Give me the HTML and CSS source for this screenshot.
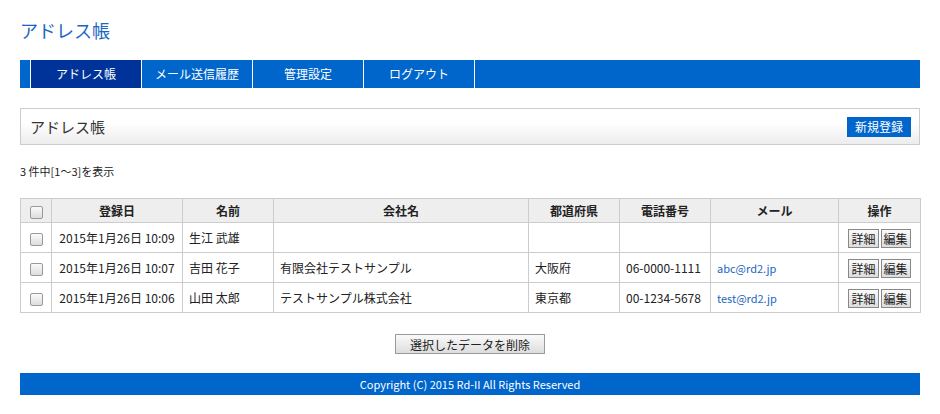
FILE: index.html
```html
<!DOCTYPE html>
<html lang="ja">
<head>
    <meta charset="UTF-8">
    <title>アドレス帳</title>
    <link rel="stylesheet" href="styles.css">
</head>
<body>
    <div class="wrap">
        <h1 class="site-title">アドレス帳</h1>
        <ul class="nav">
            <li class="active"><a href="#">アドレス帳</a></li>
            <li><a href="#">メール送信履歴</a></li>
            <li><a href="#">管理設定</a></li>
            <li><a href="#">ログアウト</a></li>
        </ul>

        <div class="panel-head">
            <h2>アドレス帳</h2>
            <a class="btn-new" href="#">新規登録</a>
        </div>

        <p class="count">3 件中[1～3]を表示</p>

        <table class="list">
            <colgroup>
                <col style="width:31px">
                <col style="width:131px">
                <col style="width:91px">
                <col style="width:255px">
                <col style="width:91px">
                <col style="width:91px">
                <col style="width:128px">
                <col style="width:82px">
            </colgroup>
            <thead>
                <tr>
                    <th><span class="chk"></span></th>
                    <th>登録日</th>
                    <th>名前</th>
                    <th>会社名</th>
                    <th>都道府県</th>
                    <th>電話番号</th>
                    <th>メール</th>
                    <th>操作</th>
                </tr>
            </thead>
            <tbody>
                <tr>
                    <td><span class="chk"></span></td>
                    <td class="c">2015年1月26日 10:09</td>
                    <td>生江 武雄</td>
                    <td></td>
                    <td></td>
                    <td></td>
                    <td></td>
                    <td class="c"><span class="sbtn">詳細</span><span class="sbtn">編集</span></td>
                </tr>
                <tr>
                    <td><span class="chk"></span></td>
                    <td class="c">2015年1月26日 10:07</td>
                    <td>吉田 花子</td>
                    <td>有限会社テストサンプル</td>
                    <td>大阪府</td>
                    <td>06-0000-1111</td>
                    <td><a href="#">abc@rd2.jp</a></td>
                    <td class="c"><span class="sbtn">詳細</span><span class="sbtn">編集</span></td>
                </tr>
                <tr>
                    <td><span class="chk"></span></td>
                    <td class="c">2015年1月26日 10:06</td>
                    <td>山田 太郎</td>
                    <td>テストサンプル株式会社</td>
                    <td>東京都</td>
                    <td>00-1234-5678</td>
                    <td><a href="#">test@rd2.jp</a></td>
                    <td class="c"><span class="sbtn">詳細</span><span class="sbtn">編集</span></td>
                </tr>
            </tbody>
        </table>

        <div class="actions">
            <button class="btn-del">選択したデータを削除</button>
        </div>

        <div class="footer">Copyright (C) 2015 Rd-II All Rights Reserved</div>
    </div>
</body>
</html>
```

FILE: styles.css
```css
body {
    margin: 0;
    font-family: "Noto Sans CJK JP", "Liberation Sans", sans-serif;
    font-size: 12px;
    color: #222;
    background: #fff;
}
.wrap {
    width: 900px;
    margin: 0 20px;
}
.site-title {
    margin: 0;
    padding-top: 16px;
    height: 28px;
    line-height: 28px;
    font-size: 18px;
    font-weight: normal;
    color: #1a66c2;
}
.nav {
    list-style: none;
    margin: 16px 0 0;
    padding: 0 0 0 10px;
    height: 28px;
    background: #0066cc;
    display: flex;
}
.nav li {
    width: 110px;
    border-left: 1px solid #fff;
}
.nav li:last-child {
    border-right: 1px solid #fff;
}
.nav a {
    display: block;
    height: 28px;
    line-height: 28px;
    text-align: center;
    color: #fff;
    text-decoration: none;
    font-size: 12px;
}
.nav li.active a {
    background: #003399;
}
.panel-head {
    margin-top: 20px;
    height: 35px;
    border: 1px solid #ccc;
    background: linear-gradient(#fff 40%, #ececec);
    display: flex;
    align-items: center;
    justify-content: space-between;
    padding: 0 8px 0 9px;
}
.panel-head h2 {
    margin: 0;
    font-size: 15px;
    font-weight: normal;
    color: #333;
}
.btn-new {
    display: block;
    width: 64px;
    height: 20px;
    line-height: 20px;
    text-align: center;
    background: #0066cc;
    color: #fff;
    text-decoration: none;
    font-size: 12px;
}
.count {
    margin: 17px 0 0;
    line-height: 18px;
    font-size: 11px;
}
.list {
    margin-top: 18px;
    width: 900px;
    border-collapse: collapse;
    table-layout: fixed;
}
.list th,
.list td {
    border: 1px solid #ccc;
    padding: 0 6px;
    white-space: nowrap;
}
.list th {
    height: 23px;
    background: #eee;
    font-weight: bold;
    text-align: center;
    font-size: 12px;
}
.list td {
    height: 29px;
    font-size: 12px;
}
.list td.c {
    text-align: center;
}
.list th:first-child,
.list td:first-child {
    padding: 0;
    text-align: center;
}
.list a {
    color: #1a66c2;
    text-decoration: none;
    font-size: 11px;
}
.chk {
    display: inline-block;
    width: 11px;
    height: 11px;
    border: 1px solid #999;
    border-radius: 2px;
    background: linear-gradient(#fafafa, #ddd);
    vertical-align: middle;
}
.sbtn {
    display: inline-block;
    height: 17px;
    line-height: 17px;
    padding: 0 2px;
    margin: 0 1px;
    border: 1px solid #888;
    background: linear-gradient(#fafafa, #ddd);
    font-size: 12px;
    vertical-align: middle;
}
.actions {
    margin-top: 21px;
    display: flex;
    justify-content: center;
}
.btn-del {
    width: 150px;
    height: 20px;
    padding: 0;
    border: 1px solid #999;
    background: linear-gradient(#fafafa, #ddd);
    font-family: inherit;
    font-size: 12px;
    color: #222;
}
.footer {
    margin-top: 19px;
    height: 22px;
    line-height: 22px;
    background: #0066cc;
    color: #fff;
    text-align: center;
    font-size: 11px;
}
```
